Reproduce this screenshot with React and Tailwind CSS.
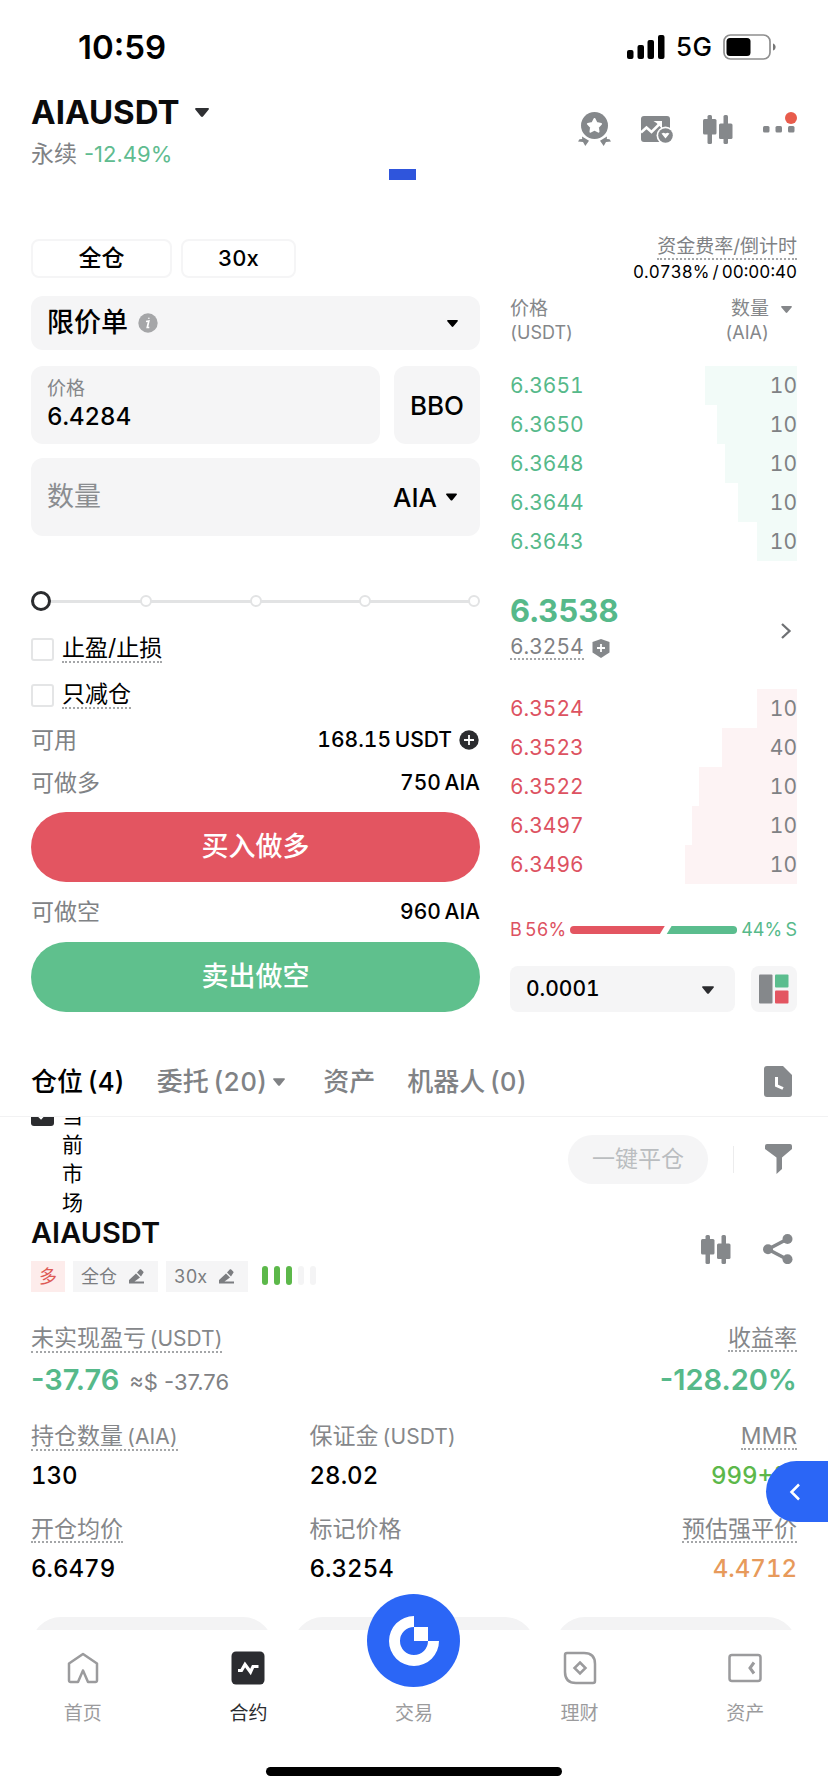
import { useState } from "react";
import clsx from "clsx";

const bids = [
  { price: "6.3651", qty: 10, depth: 64 },
  { price: "6.3650", qty: 10, depth: 56 },
  { price: "6.3648", qty: 10, depth: 50 },
  { price: "6.3644", qty: 10, depth: 41 },
  { price: "6.3643", qty: 10, depth: 28 },
];

const asks = [
  { price: "6.3524", qty: 10, depth: 28 },
  { price: "6.3523", qty: 40, depth: 52 },
  { price: "6.3522", qty: 10, depth: 68 },
  { price: "6.3497", qty: 10, depth: 73 },
  { price: "6.3496", qty: 10, depth: 78 },
];

const Caret = ({ className }) => (
  <svg viewBox="0 0 14 9" className={clsx("shrink-0 fill-current", className)} aria-hidden="true">
    <path d="M1 0h12c.8 0 1.200.9.7 1.500L8 8.500c-.5.6-1.400.6-2 0L.3 1.500C-.2.9.200 0 1 0Z" />
  </svg>
);

const CandleIcon = () => (
  <svg viewBox="0 0 30 29" className="w-[30px] h-[29px] fill-current" aria-hidden="true">
    <rect x="4.500" y="0" width="4.500" height="29" rx="1.500" />
    <rect x="0" y="4" width="13.500" height="15.500" rx="1.500" />
    <rect x="20.500" y="0" width="4.500" height="29" rx="1.500" />
    <rect x="16" y="8.500" width="13.500" height="15.500" rx="1.500" />
  </svg>
);

const MedalIcon = () => (
  <svg viewBox="0 0 33 34" className="w-[33px] h-[34px] fill-current" aria-hidden="true">
    <circle cx="16.500" cy="13.500" r="13.500" />
    <path
      d="M16.500 7l2.100 4.100 4.500.8-3.200 3.300.6 4.500-4-2-4 2 .6-4.500-3.200-3.300 4.500-.8z"
      fill="#fff"
      stroke="#fff"
      strokeWidth="2"
      strokeLinejoin="round"
    />
    <path d="M4 24.500l7 4.200-3.700 5.300-2.300-4-5-.5 1.500-2.200 2.700-.3z" />
    <path d="M29 24.500l-7 4.200 3.700 5.300 2.300-4 5-.5-1.500-2.200-2.700-.3z" />
  </svg>
);

const ChartIcon = () => (
  <svg viewBox="0 0 32 27" className="w-8 h-[27px]" aria-hidden="true">
    <rect x="0" y="0" width="29" height="26" rx="3" fill="currentColor" />
    <path d="M0 16.500l5.500-5 5 4.500 8-8" fill="none" stroke="#fff" strokeWidth="2.500" />
    <path d="M12.500 5h8.500v8l-2.500-3-3-3z" fill="#fff" />
    <circle cx="24.500" cy="19.500" r="9" fill="#fff" />
    <circle cx="24.500" cy="19.500" r="7.300" fill="currentColor" />
    <path d="M20.500 17.500l2.200-.8 1.800.9 1.800-.9 2.200.8-4 5z" fill="#fff" />
  </svg>
);

const PencilIcon = () => (
  <svg viewBox="0 0 16 15" className="w-4 h-[15px] fill-current" aria-hidden="true">
    <path d="M0 14.500V11l7-6.500L11 8.500l-5.500 4H15v2zM8 3.500l2.700-3c.5-.5 1-.5 1.500 0l2 2c.5.500.5 1 0 1.500L12 7.500z" />
  </svg>
);

const Dotted = ({ children, className }) => (
  <span className={clsx("inline-block border-b-2 border-dotted border-[#a4a6a8]", className)}>
    {children}
  </span>
);

const BookRows = ({ rows, side }) => (
  <tbody>
    {rows.map((row) => (
      <tr key={row.price} className="h-[39px]">
        <td className={clsx("w-1/2 p-0", side === "bid" ? "text-[#56b98a]" : "text-[#dd5261]")}>
          {row.price}
        </td>
        <td className="relative w-1/2 p-0 text-right text-[#7f8184]">
          <span
            className={clsx(
              "absolute inset-y-0 right-0",
              side === "bid" ? "bg-[#f2fbf8]" : "bg-[#fdf3f4]"
            )}
            style={{ width: `${row.depth}%` }}
          />
          <span className="relative">{row.qty}</span>
        </td>
      </tr>
    ))}
  </tbody>
);

const StatusBar = () => (
  <div className="flex h-[94px] items-center justify-between pl-[78px] pr-[52px] text-black">
    <span className="text-[33px] font-semibold leading-10 proportional-nums">10:59</span>
    <div className="flex items-center gap-[11px]">
      <svg viewBox="0 0 38 24" className="w-[38px] h-6" aria-hidden="true">
        <rect x="0" y="15" width="6.500" height="9" rx="2" />
        <rect x="10.500" y="10" width="6.500" height="14" rx="2" />
        <rect x="20.500" y="5" width="6.500" height="19" rx="2" />
        <rect x="31" y="0" width="6.500" height="24" rx="2" />
      </svg>
      <span className="text-[26px] font-medium leading-8">5G</span>
      <svg viewBox="0 0 53 26" className="w-[53px] h-[26px]" aria-hidden="true">
        <rect x="1" y="1" width="46" height="24" rx="6.500" fill="none" stroke="#8f8f8f" strokeWidth="1.700" />
        <rect x="3.500" y="4" width="24" height="18" rx="3.500" />
        <path d="M50 9.500c3.500 1 3.500 6 0 7z" fill="#777" />
      </svg>
    </div>
  </div>
);

const Header = () => (
  <header className="flex items-start justify-between px-[31px]">
    <div>
      <button className="flex items-center gap-4 text-[33px] font-bold leading-9 text-[#0b0b0c]">
        AIAUSDT
        <Caret className="w-[14px] h-[9px] text-[#2f3033]" />
      </button>
      <p className="mt-[10px] flex gap-[7px] text-[23px] leading-7 text-[#808285]">
        永续 <span className="text-[22px] text-[#5fbc90] proportional-nums">-12.49%</span>
      </p>
    </div>
    <div className="mt-[18px] mr-[2px] flex h-[34px] items-center gap-[30px] text-[#85888b]">
      <button aria-label="奖励"><MedalIcon /></button>
      <button aria-label="行情"><ChartIcon /></button>
      <button aria-label="K线"><CandleIcon /></button>
      <button aria-label="更多" className="relative">
        <svg viewBox="0 0 32 7" className="w-8 h-[7px] fill-current" aria-hidden="true">
          <rect x="0" width="6.500" height="6.500" rx="1.500" />
          <rect x="12.500" width="6.500" height="6.500" rx="1.500" />
          <rect x="25" width="6.500" height="6.500" rx="1.500" />
        </svg>
        <span className="absolute -top-[14px] -right-[2px] size-3 rounded-full bg-[#e85c4c]" />
      </button>
    </div>
  </header>
);

const OrderForm = () => {
  const [price, setPrice] = useState("6.4284");
  const [amount, setAmount] = useState("");
  const [percent, setPercent] = useState(0);

  return (
    <section className="flex-[449] min-w-0 pt-1 text-black">
      <div className="flex gap-[9px]">
        <button className="h-[39px] w-[141px] rounded-lg border-2 border-[#f5f5f6] text-[23px] font-medium">
          全仓
        </button>
        <button className="h-[39px] w-[115px] rounded-lg border-2 border-[#f5f5f6] text-[22px] font-medium">
          30x
        </button>
      </div>

      <div className="mt-[18px] flex h-[54px] items-center rounded-xl bg-[#f5f5f6] px-4">
        <select aria-label="订单类型" className="w-[91px] appearance-none bg-transparent text-[27px] font-medium outline-none">
          <option>限价单</option>
        </select>
        <svg viewBox="0 0 20 20" className="size-5" aria-hidden="true">
          <circle cx="10" cy="10" r="9.700" fill="#a5a6a8" />
          <path d="M8 8.500l2.800-.5-1.500 6.500h2M10.800 4.800v1" stroke="#fff" strokeWidth="1.700" fill="none" />
        </svg>
        <Caret className="ml-auto mr-[6px] w-[11px] h-[7px]" />
      </div>

      <div className="mt-4 flex h-[78px] gap-[14px]">
        <label className="flex min-w-0 flex-1 flex-col justify-center rounded-xl bg-[#f5f5f6] px-4">
          <span className="text-[19px] leading-6 text-[#85878a]">价格</span>
          <input
            value={price}
            onChange={(e) => setPrice(e.target.value)}
            className="w-full bg-transparent text-[24px] font-medium leading-8 outline-none"
          />
        </label>
        <button className="w-[86px] rounded-xl bg-[#f5f5f6] text-[26px] font-medium">BBO</button>
      </div>

      <div className="mt-[14px] flex h-[78px] items-center rounded-xl bg-[#f5f5f6] px-4">
        <input
          aria-label="数量"
          placeholder="数量"
          value={amount}
          onChange={(e) => setAmount(e.target.value)}
          className="min-w-0 flex-1 bg-transparent text-[27px] outline-none placeholder:text-[#8b8d90]"
        />
        <button className="mr-[7px] flex items-center gap-[9px] text-[26px] font-medium">
          AIA <Caret className="w-[11px] h-[8px]" />
        </button>
      </div>

      <div className="relative mt-[55px] h-5">
        <div className="absolute inset-x-2 top-[9px] h-[3px] bg-[#e2e3e4]" />
        <div className="absolute inset-0 flex items-center justify-between">
          {[0, 25, 50, 75, 100].map((mark) => (
            <span key={mark} className="size-3 rounded-full border-2 border-[#e2e3e4] bg-white" />
          ))}
        </div>
        <input
          type="range"
          aria-label="仓位比例"
          value={percent}
          onChange={(e) => setPercent(e.target.value)}
          className="absolute inset-0 h-5 w-full appearance-none bg-transparent [&::-webkit-slider-thumb]:size-5 [&::-webkit-slider-thumb]:appearance-none [&::-webkit-slider-thumb]:rounded-full [&::-webkit-slider-thumb]:border-[3px] [&::-webkit-slider-thumb]:border-[#2b2c2f] [&::-webkit-slider-thumb]:bg-white"
        />
      </div>

      <label className="mt-[23px] flex h-[30px] items-center gap-2 text-[23px]">
        <input type="checkbox" className="size-[23px] appearance-none rounded-[3px] border-2 border-[#e4e5e6] bg-white checked:bg-[#2b2c2f]" />
        <Dotted className="leading-[26px]">止盈/止损</Dotted>
      </label>
      <label className="mt-4 flex h-[30px] items-center gap-2 text-[23px]">
        <input type="checkbox" className="size-[23px] appearance-none rounded-[3px] border-2 border-[#e4e5e6] bg-white checked:bg-[#2b2c2f]" />
        <Dotted className="leading-[26px]">只减仓</Dotted>
      </label>

      <div className="mt-[15px] flex items-center justify-between text-[23px] leading-[30px]">
        <span className="text-[#808285]">可用</span>
        <span className="flex items-center gap-[7px] text-[21px] font-medium">
          168.15&thinsp;USDT
          <button aria-label="充值" className="mr-px">
            <svg viewBox="0 0 20 20" className="size-5" aria-hidden="true">
              <circle cx="10" cy="10" r="9.700" fill="#2b2c2f" />
              <path d="M10 5v10M5 10h10" stroke="#fff" strokeWidth="1.800" />
            </svg>
          </button>
        </span>
      </div>
      <div className="mt-[13px] flex justify-between text-[23px] leading-[30px]">
        <span className="text-[#808285]">可做多</span>
        <span className="text-[21px] font-medium">750&thinsp;AIA</span>
      </div>
      <button className="mt-[14px] h-[70px] w-full rounded-full bg-[#e35561] text-[27px] font-medium text-white">
        买入做多
      </button>
      <div className="mt-[15px] flex justify-between text-[23px] leading-[30px]">
        <span className="text-[#808285]">可做空</span>
        <span className="text-[21px] font-medium">960&thinsp;AIA</span>
      </div>
      <button className="mt-[15px] h-[70px] w-full rounded-full bg-[#5fc08d] text-[27px] font-medium text-white">
        卖出做空
      </button>
    </section>
  );
};

const OrderBook = () => (
  <section className="flex-[287] min-w-0 pt-px">
    <div className="flex flex-col items-end">
      <Dotted className="text-[19px] leading-[22px] text-[#808285]">资金费率/倒计时</Dotted>
      <span className="text-[17px] leading-6 text-black">0.0738%&thinsp;/&thinsp;00:00:40</span>
    </div>

    <table className="mt-[13px] w-full text-[21px]">
      <thead className="text-[19px] leading-6 text-[#85878a]">
        <tr>
          <th className="p-0 pb-[21px] text-left font-normal">
            价格<br />
            <span className="text-[18px]">(USDT)</span>
          </th>
          <th className="p-0 pb-[21px] font-normal">
            <div className="flex items-start justify-end gap-3 pr-[5px] text-right">
              <span>
                数量<br />
                <span className="text-[18px]">(AIA)</span>
              </span>
              <Caret className="mt-[9px] w-[11px] h-[7px]" />
            </div>
          </th>
        </tr>
      </thead>
      <BookRows rows={bids} side="bid" />
    </table>

    <div className="mt-8 flex items-center justify-between">
      <div>
        <p className="text-[31px] font-bold leading-9 text-[#56b98a]">6.3538</p>
        <p className="mt-[7px] flex items-center gap-2 text-[21px] text-[#7f8184]">
          <Dotted className="leading-[22px]">6.3254</Dotted>
          <svg viewBox="0 0 18 19" className="w-[18px] h-[19px]" aria-hidden="true">
            <path d="M9 0l8.500 3v10.500L9 19 .5 13.500V3z" fill="#85888b" />
            <path d="M9 5v8M5 9h8" stroke="#fff" strokeWidth="1.800" />
          </svg>
        </p>
      </div>
      <button aria-label="深度" className="mr-[5px] pt-2 text-[#6f7174]">
        <svg viewBox="0 0 12 18" className="w-3 h-[18px]" fill="none" stroke="currentColor" strokeWidth="2.300" aria-hidden="true">
          <path d="M2 2l7.500 7L2 16" />
        </svg>
      </button>
    </div>

    <table className="mt-[29px] w-full text-[21px]">
      <BookRows rows={asks} side="ask" />
    </table>

    <div className="mt-[34px] flex items-center gap-1 whitespace-nowrap text-[18px] leading-6">
      <span className="text-[#dd5261]">B&thinsp;56%</span>
      <svg viewBox="0 0 171 8" preserveAspectRatio="none" className="h-2 min-w-0 flex-1" aria-hidden="true">
        <path d="M4 0h93l-5 8H4a4 4 0 0 1 0-8z" fill="#e35561" />
        <path d="M104 0h63a4 4 0 0 1 0 8H99z" fill="#5bbd8e" />
      </svg>
      <span className="text-[#56b98a]">44%&thinsp;S</span>
    </div>

    <div className="mt-6 flex h-[46px] gap-4">
      <div className="relative flex-1">
        <select aria-label="价格精度" className="size-full appearance-none rounded-lg bg-[#f5f5f6] px-4 text-[21px] font-medium text-black outline-none">
          <option>0.0001</option>
        </select>
        <Caret className="pointer-events-none absolute right-[21px] top-[20px] w-[12px] h-[8px] text-[#2b2c2f]" />
      </div>
      <button aria-label="盘口样式" className="flex w-[46px] items-center justify-center rounded-lg bg-[#f5f5f6]">
        <svg viewBox="0 0 30 30" className="size-[30px]" aria-hidden="true">
          <rect x="0" y="0.500" width="13.500" height="29" rx="1" fill="#85888b" />
          <rect x="16" y="0.500" width="13.500" height="13" rx="1" fill="#5bbd8e" />
          <rect x="16" y="16.500" width="13.500" height="13" rx="1" fill="#e35561" />
        </svg>
      </button>
    </div>
  </section>
);

const Tabs = () => (
  <nav className="mt-[35px] flex h-[70px] shrink-0 items-center border-b border-[#f2f2f3] px-[31px] text-[26px] font-medium text-[#808285]">
    <button className="text-black">仓位&thinsp;(4)</button>
    <button className="ml-8 flex items-center gap-[6px]">
      委托&thinsp;(20) <Caret className="w-[12px] h-[8px]" />
    </button>
    <button className="ml-[38px]">资产</button>
    <button className="ml-8">机器人&thinsp;(0)</button>
    <button aria-label="历史" className="ml-auto mr-[5px]">
      <svg viewBox="0 0 28 31" className="w-7 h-[31px]" aria-hidden="true">
        <path d="M3 0h16l9 9v19a3 3 0 0 1-3 3H3a3 3 0 0 1-3-3V3a3 3 0 0 1 3-3z" fill="#85888b" />
        <path d="M12.500 11v8.500l6.500 3" fill="none" stroke="#fff" strokeWidth="3" />
      </svg>
    </button>
  </nav>
);

const StatLabel = ({ label, unit, dotted = true }) => {
  const text = (
    <>
      {label}
      {unit && <span className="text-[21px]">&thinsp;({unit})</span>}
    </>
  );
  return (
    <dt className="h-[26px] whitespace-nowrap text-[23px] leading-6 text-[#85878a]">
      {dotted ? <Dotted>{text}</Dotted> : text}
    </dt>
  );
};

const Stat = ({ label, unit, value, dotted, right, className }) => (
  <div className={right ? "text-right" : ""}>
    <StatLabel label={label} unit={unit} dotted={dotted} />
    <dd className={clsx("mt-3 text-[24px] font-medium leading-7", className)}>{value}</dd>
  </div>
);

const Position = () => (
  <article className="px-[31px] pt-px">
    <div className="flex items-start justify-between">
      <div>
        <h2 className="text-[29px] font-semibold leading-[30px] text-[#0b0b0c]">AIAUSDT</h2>
        <div className="mt-[13px] flex h-[31px] items-stretch gap-2 text-[18px] leading-[31px] text-[#7b7d80]">
          <span className="bg-[#fdeceb] px-2 text-[#dd5a55]">多</span>
          <button className="flex items-center gap-3 bg-[#f5f5f6] pl-2 pr-[13px]">
            全仓 <PencilIcon />
          </button>
          <button className="flex items-center gap-3 bg-[#f5f5f6] pl-2 pr-[13px]">
            30x <PencilIcon />
          </button>
          <span className="ml-[6px] flex items-center gap-[6px] pb-[3px]">
            {[1, 2, 3, 4, 5].map((level) => (
              <i
                key={level}
                className={clsx("h-[19px] w-[6px] rounded-full", level < 4 ? "bg-[#5cb84a]" : "bg-[#f4f4f5]")}
              />
            ))}
          </span>
        </div>
      </div>
      <div className="mt-4 flex items-center gap-8 pr-1 text-[#85888b]">
        <button aria-label="K线"><CandleIcon /></button>
        <button aria-label="分享">
          <svg viewBox="0 0 30 30" className="size-[30px] fill-current" aria-hidden="true">
            <path d="M24.500 5L5 15.200 24.500 25.500" fill="none" stroke="currentColor" strokeWidth="3.500" />
            <circle cx="5" cy="15.200" r="5" />
            <circle cx="24.500" cy="5" r="5" />
            <circle cx="24.500" cy="25.200" r="5" />
          </svg>
        </button>
      </div>
    </div>

    <dl className="mt-[34px] flex justify-between proportional-nums">
      <div>
        <StatLabel label="未实现盈亏" unit="USDT" />
        <dd className="mt-3 flex items-baseline gap-[10px] text-[29px] font-semibold leading-8 text-[#56b98a]">
          -37.76
          <span className="text-[22px] font-normal text-[#7f8184]">≈$ -37.76</span>
        </dd>
      </div>
      <div className="text-right">
        <StatLabel label="收益率" />
        <dd className="mt-3 text-[29px] font-semibold leading-8 text-[#56b98a]">-128.20%</dd>
      </div>
    </dl>

    <dl className="mt-[26px] grid grid-cols-[4fr_4fr_3fr] gap-y-[27px] text-black">
      <Stat label="持仓数量" unit="AIA" value="130" />
      <Stat label="保证金" unit="USDT" value="28.02" dotted={false} />
      <Stat label="MMR" value="999+%" right className="text-[#5cb84a]" />
      <Stat label="开仓均价" value="6.6479" />
      <Stat label="标记价格" value="6.3254" dotted={false} />
      <Stat label="预估强平价" value="4.4712" right className="text-[#e79a5b]" />
    </dl>

    <div className="mt-[34px] grid grid-cols-3 gap-5">
      <button aria-label="止盈止损" className="h-[60px] rounded-full bg-[#f3f3f4]" />
      <button aria-label="反手" className="h-[60px] rounded-full bg-[#f3f3f4]" />
      <button aria-label="平仓" className="h-[60px] rounded-full bg-[#f3f3f4]" />
    </div>
  </article>
);

const Positions = () => (
  <section className="min-h-0 flex-1 overflow-hidden">
    <div className="-mt-4 flex items-center justify-between px-[31px]">
      <label className="flex items-start gap-2">
        <span className="relative mt-[2px]">
          <input type="checkbox" defaultChecked className="block size-[23px] appearance-none rounded-[3px] bg-[#2b2c2f]" />
          <svg viewBox="0 0 23 23" className="pointer-events-none absolute inset-0" aria-hidden="true">
            <path d="M5 10l5 5 8-9" fill="none" stroke="#fff" strokeWidth="2.500" />
          </svg>
        </span>
        <span className="w-[22px] break-all text-[21px] leading-[29px] text-black">当前市场</span>
      </label>
      <div className="flex items-center">
        <button className="h-[49px] rounded-full bg-[#f5f5f6] px-[24px] text-[23px] text-[#babdc0]">
          一键平仓
        </button>
        <span className="ml-[25px] mr-[31px] h-[27px] w-px bg-[#ececed]" />
        <button aria-label="筛选" className="mr-[5px]">
          <svg viewBox="0 0 27 30" className="w-[27px] h-[30px]" aria-hidden="true">
            <path d="M2 0h23a2 2 0 0 1 2 2v3l-10 8.500V25l-5.500 5V13.500L0 5V2a2 2 0 0 1 2-2z" fill="#85888b" />
          </svg>
        </button>
      </div>
    </div>
    <Position />
  </section>
);

const NavItem = ({ label, active, children }) => (
  <a
    href="#"
    className={clsx("flex flex-col items-center gap-4", active ? "text-[#2b2c30]" : "text-[#9b9b9d]")}
  >
    <svg viewBox="0 0 34 34" className="size-[34px]" fill="none" stroke="currentColor" strokeWidth="2.500" aria-hidden="true">
      {children}
    </svg>
    <span className="text-[19px] leading-[26px]">{label}</span>
  </a>
);

const BottomNav = () => (
  <footer className="relative shrink-0 bg-white pb-4">
    <nav className="grid grid-cols-5 pt-[21px]">
      <NavItem label="首页">
        <path d="M17 3L31 12.500V29.500a1.500 1.500 0 0 1-1.500 1.500H22L17 19.500 12 31H4.500A1.500 1.500 0 0 1 3 29.500V12.500z" strokeLinejoin="round" />
      </NavItem>
      <NavItem label="合约" active>
        <rect x="0.500" y="0.500" width="33" height="33" rx="4.500" fill="currentColor" stroke="none" />
        <path d="M7 19.500h3.500l3.500-6 5.500 7.500 2.500-5.500h5.500" stroke="#fff" strokeWidth="3.200" />
      </NavItem>
      <a href="#" className="-mt-[57px] flex flex-col items-center gap-[14px] text-[#9b9b9d]">
        <span className="flex size-[93px] items-center justify-center rounded-full bg-[#2b66f6]">
          <svg viewBox="0 0 50 50" className="size-[50px]" fill="#fff" aria-hidden="true">
            <path d="M25 0A25 25 0 1 0 50 25H39A14 14 0 1 1 25 11z" />
            <rect x="25" y="11" width="14" height="14" />
          </svg>
        </span>
        <span className="text-[19px] leading-[26px]">交易</span>
      </a>
      <NavItem label="理财">
        <path d="M4 2h17q11 0 11 11v17a2 2 0 0 1-2 2H13Q2 32 2 21V4a2 2 0 0 1 2-2z" />
        <path d="M17 11.500l5.500 5.500-5.500 5.500-5.500-5.500z" />
      </NavItem>
      <NavItem label="资产">
        <rect x="1.500" y="4" width="31" height="26" rx="2.500" />
        <path d="M26 11.500L22 17l4 5.500" strokeWidth="3" />
      </NavItem>
    </nav>
    <div className="mx-auto mt-10 h-[9px] w-[296px] rounded-full bg-black" />
  </footer>
);

export default function App() {
  return (
    <div
      lang="zh-CN"
      className="relative flex h-screen flex-col bg-white font-['Inter','Noto_Sans_CJK_SC',sans-serif] tabular-nums"
    >
      <StatusBar />
      <Header />
      <div className="flex justify-center pr-6">
        <div className="mt-px h-[11px] w-[27px] bg-[#2f55dc]" />
      </div>
      <main className="mt-[55px] flex gap-[30px] px-[31px]">
        <OrderForm />
        <OrderBook />
      </main>
      <Tabs />
      <Positions />
      <BottomNav />
      <button
        aria-label="展开"
        className="absolute bottom-[270px] right-0 flex h-[61px] w-[62px] items-center justify-center rounded-l-full bg-[#2b66f6] pr-1 text-white"
      >
        <svg viewBox="0 0 12 18" className="w-3 h-[18px]" fill="none" stroke="currentColor" strokeWidth="2.500" aria-hidden="true">
          <path d="M10 1.500L2.500 9l7.500 7.500" />
        </svg>
      </button>
    </div>
  );
}
